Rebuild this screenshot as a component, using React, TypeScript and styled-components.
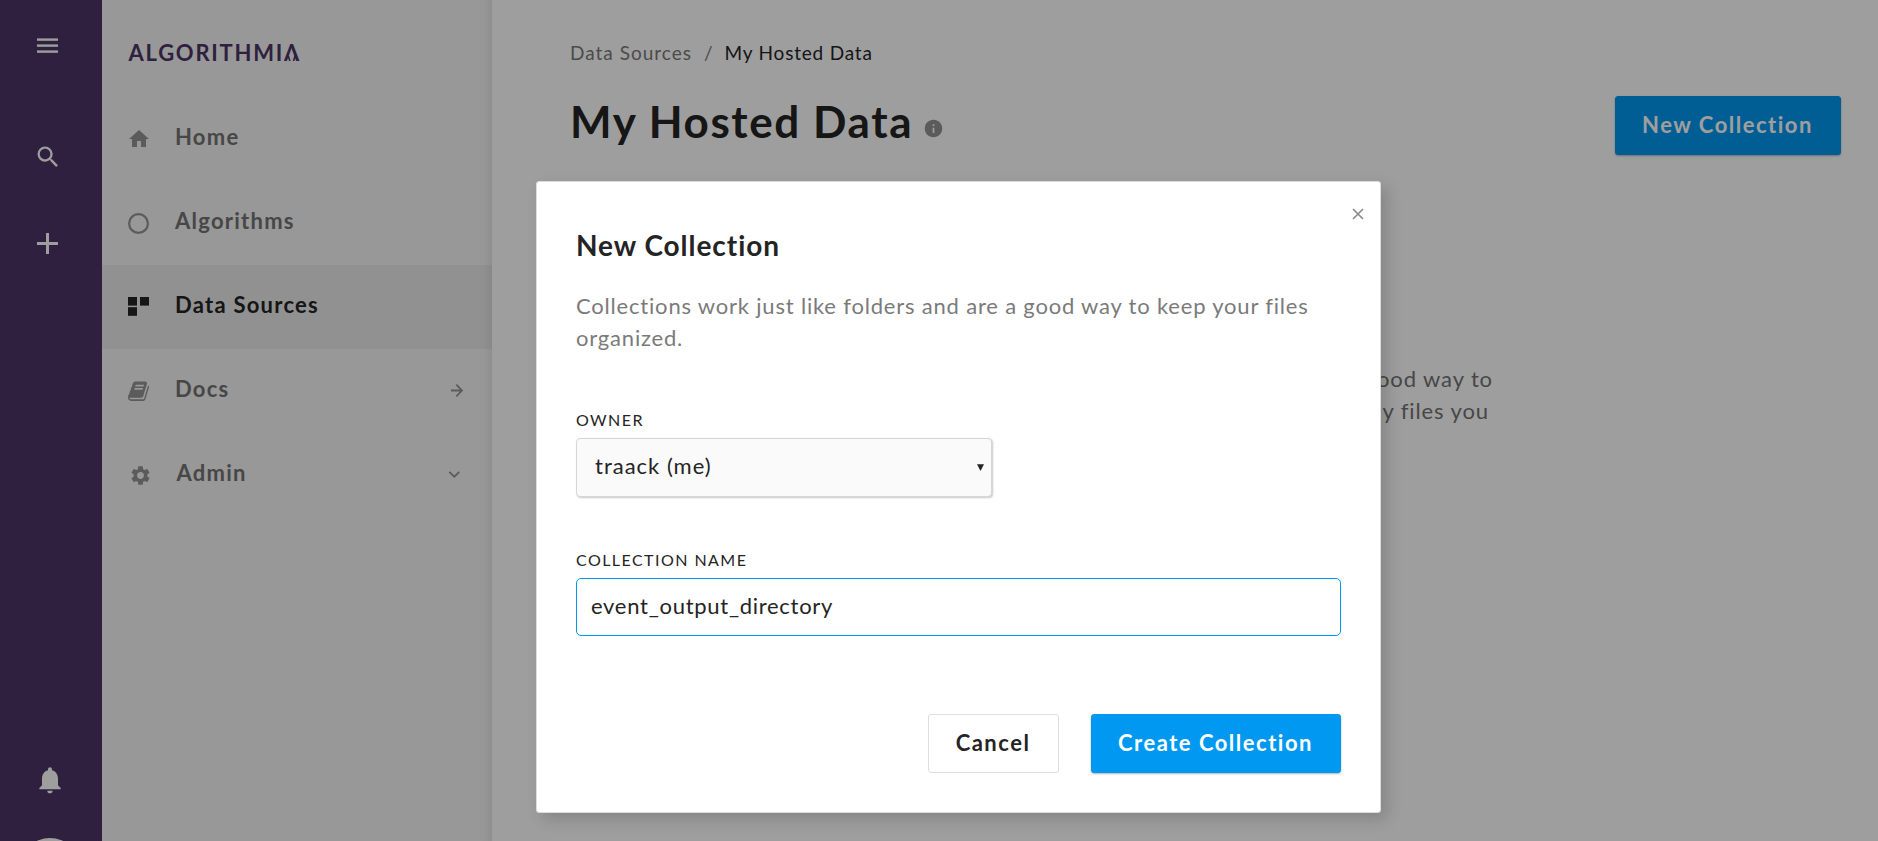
import React from "react";
import styled, { createGlobalStyle } from "styled-components";
import { MdHome, MdInfo, MdNotifications, MdSearch, MdSettings } from "react-icons/md";

const GlobalStyle = createGlobalStyle`
  * { box-sizing: border-box; }
  body { margin: 0; overflow: hidden; font-family: Lato, "Open Sans", sans-serif; color: #242424; }
  h1, h2, p { margin: 0; }
  button, input { font-family: inherit; color: inherit; }
  svg { display: block; flex: none; }
`;

const Page = styled.div`
  position: relative;
  display: flex;
  height: 841px;
  overflow: hidden;
  background: #fff;
`;

const Rail = styled.nav`
  width: 102px;
  flex: none;
  display: flex;
  flex-direction: column;
  align-items: flex-start;
  padding: 38px 0 0 37px;
  background: #4d3466;
  color: #fff;
`;

const RailIcon = styled.div<{ $after?: number; $shift?: number }>`
  flex: none;
  margin-bottom: ${(p) => p.$after ?? 0}px;
  margin-left: ${(p) => p.$shift ?? 0}px;
`;

const Avatar = styled.div`
  flex: none;
  width: 60px;
  height: 60px;
  margin-left: -17px;
  border-radius: 50%;
  background: #fff;
`;

const Sidebar = styled.aside`
  width: 390px;
  flex: none;
  background: #f5f5f5;
  box-shadow: inset -14px 0 12px -12px rgba(0, 0, 0, 0.09);
`;

const Brand = styled.div`
  display: flex;
  align-items: center;
  height: 97px;
  padding: 7px 0 0 26.5px;
  font-size: 22px;
  font-weight: 700;
  letter-spacing: 1.75px;
  color: #4d3466;
`;

const BrandMark = styled.span`
  position: relative;
  display: inline-block;

  svg {
    position: absolute;
    left: 2.2px;
    bottom: 4.7px;
  }
`;

const NavRow = styled.a<{ $active?: boolean; $indent?: number }>`
  display: flex;
  align-items: center;
  height: 84px;
  padding-left: ${(p) => 26 + (p.$indent ?? 0)}px;
  padding-right: 29px;
  background: ${(p) => (p.$active ? "rgba(0, 0, 0, 0.043)" : "transparent")};
  color: ${(p) => (p.$active ? "#242424" : "#949494")};
`;

const NavIcon = styled.span`
  width: 21px;
  display: flex;
  justify-content: center;
`;

const NavLabel = styled.span<{ $active?: boolean }>`
  flex: 1;
  margin-left: 26px;
  padding-bottom: 5px;
  font-size: 22px;
  font-weight: 700;
  letter-spacing: 1.25px;
  color: ${(p) => (p.$active ? "#242424" : "#737373")};
`;

const Main = styled.main`
  flex: 1;
  padding: 41px 37px 0 78px;
`;

const Breadcrumb = styled.div`
  display: flex;
  gap: 12px;
  font-size: 19px;
  line-height: 24px;
  color: #7a7a7a;
`;

const Crumb = styled.span<{ $current?: boolean }>`
  color: ${(p) => (p.$current ? "#242424" : "inherit")};
  letter-spacing: ${(p) => (p.$current ? 0.8 : 1)}px;
`;

const TitleRow = styled.div`
  display: flex;
  align-items: flex-start;
  margin-top: 28px;
`;

const Title = styled.h1`
  font-size: 44px;
  line-height: 56px;
  font-weight: 700;
  letter-spacing: 1.6px;
`;

const InfoIcon = styled.span`
  flex: 1;
  margin: 25px 0 0 10px;
  color: #949494;
`;

const Button = styled.button<{ $primary?: boolean }>`
  height: 59px;
  padding: 0 26px 2px 25px;
  border: 1px solid ${(p) => (p.$primary ? "#0098f0" : "#dedede")};
  border-radius: 3px;
  background: ${(p) => (p.$primary ? "#0098f0" : "#fff")};
  color: ${(p) => (p.$primary ? "#fff" : "#242424")};
  box-shadow: ${(p) => (p.$primary ? "0 1px 2px rgba(0, 0, 0, 0.3)" : "none")};
  font-size: 22px;
  font-weight: 700;
  letter-spacing: 1.5px;
  white-space: nowrap;
`;

const HeaderButton = styled(Button)`
  width: 226px;
  margin-top: 3px;
`;

const EmptyText = styled.div`
  display: flex;
  flex-direction: column;
  align-items: flex-end;
  margin-top: 208px;
  padding-right: 348px;
  font-size: 22px;
  line-height: 32px;
  letter-spacing: 0.9px;
  color: #737373;
`;

const EmptyLine = styled.span<{ $inset?: number }>`
  margin-right: ${(p) => p.$inset ?? 0}px;
`;

const Backdrop = styled.div`
  position: absolute;
  inset: 0;
  background: rgba(0, 0, 0, 0.38);
  padding: 181px 0 0 536px;
`;

const Dialog = styled.section`
  position: relative;
  width: 845px;
  height: 632px;
  padding: 45px 39px 39px;
  border: 1px solid #dcdcdc;
  border-radius: 3px;
  background: #fff;
  box-shadow: 6px 6px 16px rgba(0, 0, 0, 0.16);
`;

const CloseButton = styled.button`
  position: absolute;
  top: 26px;
  right: 16px;
  padding: 0;
  border: 0;
  background: none;
  color: #868686;
`;

const DialogTitle = styled.h2`
  font-size: 28px;
  line-height: 36px;
  font-weight: 700;
  letter-spacing: 0.95px;
`;

const DialogText = styled.p`
  margin-top: 27px;
  font-size: 22px;
  line-height: 32px;
  letter-spacing: 0.81px;
  color: #7a7a7a;
`;

const Field = styled.label<{ $before: number }>`
  display: flex;
  flex-direction: column;
  gap: 8px;
  margin-top: ${(p) => p.$before}px;
`;

const FieldName = styled.span`
  font-size: 16px;
  line-height: 20px;
  letter-spacing: 1.45px;
`;

const Select = styled.div`
  display: flex;
  align-items: center;
  justify-content: space-between;
  width: 416px;
  height: 59px;
  padding: 0 7px 0 18px;
  border: 1px solid #d6d6d6;
  border-radius: 4px;
  background: #fafafa;
  box-shadow: 1px 1px 2px rgba(0, 0, 0, 0.22);
  font-size: 22px;
  letter-spacing: 1px;
`;

const SelectValue = styled.span`
  padding-bottom: 4px;
`;

const Input = styled.input`
  width: 100%;
  height: 58px;
  padding: 0 14px 3px;
  border: 1px solid #0098f0;
  border-radius: 5px;
  outline: none;
  background: #fff;
  font-size: 22px;
  letter-spacing: 0.72px;
`;

const Actions = styled.div`
  display: flex;
  justify-content: flex-end;
  gap: 32px;
  margin-top: 78px;
`;

const CancelButton = styled(Button)`
  width: 131px;
`;

const CreateButton = styled(Button)`
  width: 250px;
`;

const MenuGlyph = () => (
  <svg width="21" height="16" fill="currentColor">
    <rect y="0.4" width="21" height="2.4" />
    <rect y="6.4" width="21" height="2.4" />
    <rect y="12.4" width="21" height="2.4" />
  </svg>
);

const PlusGlyph = () => (
  <svg width="21" height="21" fill="currentColor">
    <rect x="9" width="3" height="21" />
    <rect y="9" width="21" height="3" />
  </svg>
);

const CircleGlyph = () => (
  <svg width="21" height="21" fill="none" stroke="currentColor" strokeWidth="2.2">
    <circle cx="10.5" cy="10.5" r="9.4" />
  </svg>
);

const BlocksGlyph = () => (
  <svg width="21" height="20" fill="currentColor">
    <rect width="9" height="8.6" />
    <rect x="12" width="9" height="8.6" />
    <rect y="10.2" width="9" height="8.6" />
  </svg>
);

const BookGlyph = () => (
  <svg width="21" height="22.6" viewBox="0 0 1664 1792" fill="currentColor">
    <path d="M1639 478q40 57 18 129l-275 906q-19 64-76.5 107.5t-122.5 43.5h-923q-77 0-148.500-53.500t-99.500-131.500q-24-67-2-127 0-4 3-27t4-37q1-8-3-21.500t-3-19.500q2-11 8-21t16.500-23.500 16.500-23.500q23-38 45-91.500t30-91.500q3-10 .5-30t-.5-28q3-11 17-28t17-23q21-36 42-92t25-90q1-9-2.500-32t.5-28q4-13 22-30.500t22-22.500q19-26 42.500-84.500t27.500-96.500q1-8-3-25.500t-2-26.500q2-8 9-18t18-23 17-21q8-12 16.500-30.500t15-35 16-36 19.500-32 26.500-23.500 36-11.500 47.500 5.500l-1 3q38-9 51-9h761q74 0 114 56t18 130l-274 906q-36 119-71.500 153.500t-128.500 34.500h-869q-27 0-38 15-11 16-1 43 24 70 144 70h923q29 0 56-15.500t35-41.500l300-987q7-22 5-57 38 15 59 43zm-1064 2q-4 13 2 22.500t20 9.500h608q13 0 25.500-9.500t16.500-22.500l21-64q4-13-2-22.500t-20-9.500h-608q-13 0-25.500 9.500t-16.500 22.500zm-83 256q-4 13 2 22.500t20 9.500h608q13 0 25.500-9.500t16.500-22.500l21-64q4-13-2-22.500t-20-9.500h-608q-13 0-25.500 9.500t-16.500 22.500z" />
  </svg>
);

const ArrowGlyph = () => (
  <svg width="12" height="14" fill="none" stroke="currentColor" strokeWidth="1.8">
    <path d="M0 6.500H11M5.300 0.700L11 6.500L5.300 12.300" />
  </svg>
);

const ChevronGlyph = () => (
  <svg width="15" height="8" fill="none" stroke="currentColor" strokeWidth="1.8">
    <path d="M1.300 0.900L6.300 5.700L11.300 0.900" />
  </svg>
);

export default function App() {
  return (
    <Page>
      <GlobalStyle />
      <Rail>
        <RailIcon $after={89}><MenuGlyph /></RailIcon>
        <RailIcon $after={62} $shift={-3.5}><MdSearch size={28} /></RailIcon>
        <RailIcon $after={510}><PlusGlyph /></RailIcon>
        <RailIcon $after={42} $shift={-3}><MdNotifications size={32} /></RailIcon>
        <Avatar />
      </Rail>

      <Sidebar>
        <Brand aria-label="Algorithmia">
          ALGORITHMI
          <BrandMark>
            Λ
            <svg width="12" height="9" fill="none" stroke="currentColor" strokeWidth="1.600">
              <path d="M2.200 3.800L3.900 9M9.200 3.800L7.500 9" />
            </svg>
          </BrandMark>
        </Brand>
        <NavRow>
          <NavIcon><MdHome size={24} /></NavIcon>
          <NavLabel>Home</NavLabel>
        </NavRow>
        <NavRow>
          <NavIcon><CircleGlyph /></NavIcon>
          <NavLabel>Algorithms</NavLabel>
        </NavRow>
        <NavRow $active>
          <NavIcon><BlocksGlyph /></NavIcon>
          <NavLabel $active>Data Sources</NavLabel>
        </NavRow>
        <NavRow>
          <NavIcon><BookGlyph /></NavIcon>
          <NavLabel>Docs</NavLabel>
          <ArrowGlyph />
        </NavRow>
        <NavRow $indent={1.5}>
          <NavIcon><MdSettings size={23} /></NavIcon>
          <NavLabel>Admin</NavLabel>
          <ChevronGlyph />
        </NavRow>
      </Sidebar>

      <Main>
        <Breadcrumb>
          <Crumb>Data Sources</Crumb>
          <span>/</span>
          <Crumb $current>My Hosted Data</Crumb>
        </Breadcrumb>
        <TitleRow>
          <Title>My Hosted Data</Title>
          <InfoIcon><MdInfo size={21} /></InfoIcon>
          <HeaderButton $primary>New Collection</HeaderButton>
        </TitleRow>
        <EmptyText>
          <EmptyLine>Collections work just like folders and are a good way to</EmptyLine>
          <EmptyLine $inset={4}>keep your files organized. You can upload any files you</EmptyLine>
        </EmptyText>
      </Main>

      <Backdrop>
        <Dialog role="dialog">
          <CloseButton aria-label="Close">
            <svg width="12" height="12" fill="none" stroke="currentColor" strokeWidth="1.500">
              <path d="M1 1L11 11M11 1L1 11" />
            </svg>
          </CloseButton>
          <DialogTitle>New Collection</DialogTitle>
          <DialogText>
            Collections work just like folders and are a good way to keep your files organized.
          </DialogText>
          <Field as="div" $before={56}>
            <FieldName>OWNER</FieldName>
            <Select role="combobox">
              <SelectValue>traack (me)</SelectValue>
              <svg width="7" height="7" fill="currentColor">
                <path d="M0 0.300H7L3.500 7Z" />
              </svg>
            </Select>
          </Field>
          <Field $before={53}>
            <FieldName>COLLECTION NAME</FieldName>
            <Input defaultValue="event_output_directory" />
          </Field>
          <Actions>
            <CancelButton>Cancel</CancelButton>
            <CreateButton $primary>Create Collection</CreateButton>
          </Actions>
        </Dialog>
      </Backdrop>
    </Page>
  );
}
